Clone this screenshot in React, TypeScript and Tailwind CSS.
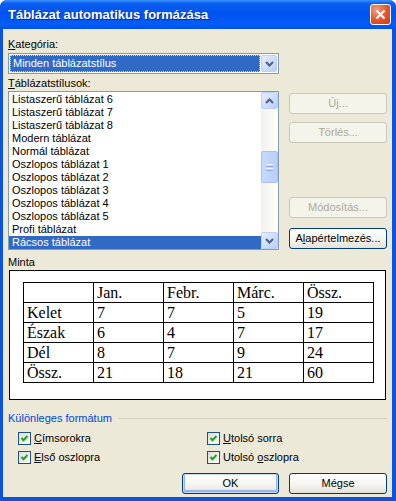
import React from 'react';

const styles = [
    'Listaszerű táblázat 6',
    'Listaszerű táblázat 7',
    'Listaszerű táblázat 8',
    'Modern táblázat',
    'Normál táblázat',
    'Oszlopos táblázat 1',
    'Oszlopos táblázat 2',
    'Oszlopos táblázat 3',
    'Oszlopos táblázat 4',
    'Oszlopos táblázat 5',
    'Profi táblázat',
    'Rácsos táblázat',
];

const sample = [
    ['', 'Jan.', 'Febr.', 'Márc.', 'Össz.'],
    ['Kelet', '7', '7', '5', '19'],
    ['Észak', '6', '4', '7', '17'],
    ['Dél', '8', '7', '9', '24'],
    ['Össz.', '21', '18', '21', '60'],
];

function Chevron({ up = false }: { up?: boolean }) {
    return (
        <svg width="9" height="6" viewBox="0 0 9 6">
            <path
                d={up ? 'M1 5 L4.5 1.5 L8 5' : 'M1 1 L4.5 4.5 L8 1'}
                fill="none"
                stroke="#4D6185"
                strokeWidth="2"
            />
        </svg>
    );
}

function ScrollButton({ up = false }: { up?: boolean }) {
    return (
        <div className="h-[17px] w-[17px] flex items-center justify-center rounded-[2px] border border-[#BAD0F7] bg-[linear-gradient(135deg,#E6EEFF,#B9CEF9)]">
            <Chevron up={up} />
        </div>
    );
}

function Button({
    children,
    disabled = false,
    isDefault = false,
    width = 'w-[98px]',
}: {
    children: React.ReactNode;
    disabled?: boolean;
    isDefault?: boolean;
    width?: string;
}) {
    const base = 'h-[21px] flex items-center justify-center rounded-[3px] border text-[11px]';
    if (disabled) {
        return (
            <div className={`${base} ${width} border-[#C9C7BA] bg-[#F5F4EA] text-[#ACA899]`}>
                {children}
            </div>
        );
    }
    return (
        <div
            className={`${base} ${width} border-[#003C74] bg-[linear-gradient(180deg,#FFFFFF_0%,#F4F3EE_60%,#E3E1D7_100%)] text-black ${
                isDefault ? 'shadow-[inset_0_0_0_1px_#C6D9F7,inset_0_-1px_0_2px_#98B4EC]' : ''
            }`}
        >
            {children}
        </div>
    );
}

function Check({ label }: { label: React.ReactNode }) {
    return (
        <div className="flex items-center h-[13px]">
            <span className="w-[13px] h-[13px] flex items-center justify-center border border-[#1C5180] bg-[linear-gradient(135deg,#DCDCD7,#FFFFFF)]">
                <svg width="9" height="9" viewBox="0 0 9 9">
                    <path d="M1.5 4 L3.5 6.2 L7.5 2" fill="none" stroke="#21A121" strokeWidth="2" />
                </svg>
            </span>
            <span className="ml-[3px] leading-[13px]">{label}</span>
        </div>
    );
}

export default function App() {
    return (
        <div className="w-[396px] h-[501px] bg-white font-['Liberation_Sans',Tahoma,sans-serif]">
            <div className="h-full flex flex-col rounded-t-[7px] overflow-hidden bg-[#0B53E0]">
                {/* title bar */}
                <div className="h-[29px] shrink-0 flex items-center pl-[8px] pr-[5px] bg-[linear-gradient(180deg,#3D95FF_0%,#0A5EF0_12%,#0053EE_45%,#005CF8_85%,#0050E6_100%)]">
                    <span className="flex-1 text-white font-bold text-[13px] [text-shadow:1px_1px_#0A2B8C]">
                        Táblázat automatikus formázása
                    </span>
                    <div className="w-[21px] h-[21px] rounded-[3px] border border-white bg-[radial-gradient(circle_at_30%_25%,#F29A7C,#E0552F_55%,#C63A17)] flex items-center justify-center">
                        <svg width="11" height="11" viewBox="0 0 11 11">
                            <path d="M1.5 1.5 L9.5 9.5 M9.5 1.5 L1.5 9.5" stroke="white" strokeWidth="2.2" />
                        </svg>
                    </div>
                </div>

                <div className="flex-1 flex flex-col pl-[3px] pr-[4px] pb-[4px]">
                    <div className="flex-1 flex flex-col bg-[#ECE9D8] pl-[5px] pr-[5px] pt-[9px] text-[11px] text-black">
                        <div className="h-[13px] leading-[13px]">
                            <span className="underline">K</span>ategória:
                        </div>
                        <div className="mt-[2px] w-[271px] h-[21px] border border-[#7F9DB9] bg-white flex p-[1px]">
                            <div className="flex-1 flex items-center bg-[#316AC5] text-white pl-[2px] border border-dotted border-[#C5D3EE]">
                                Minden táblázatstílus
                            </div>
                            <div className="ml-[1px] w-[16px] flex items-center justify-center rounded-[2px] border border-[#BAD0F7] bg-[linear-gradient(135deg,#E6EEFF,#B9CEF9)]">
                                <Chevron />
                            </div>
                        </div>

                        <div className="mt-[3px] h-[13px] leading-[13px]">
                            <span className="underline">T</span>áblázatstílusok:
                        </div>
                        <div className="mt-[1px] flex gap-[10px]">
                            <div className="w-[271px] h-[159px] border border-[#7F9DB9] bg-white flex">
                                <div className="flex-1 pt-[1px] flex flex-col">
                                    {styles.map((s, i) => (
                                        <div
                                            key={s}
                                            className={`h-[13px] leading-[13px] pl-[3px] ${
                                                i === styles.length - 1 ? 'bg-[#316AC5] text-white' : ''
                                            }`}
                                        >
                                            {s}
                                        </div>
                                    ))}
                                </div>
                                <div className="w-[17px] flex flex-col bg-[linear-gradient(90deg,#F3F1EC,#FEFEFB)]">
                                    <ScrollButton up />
                                    <div className="mt-[42px] h-[32px] rounded-[2px] border border-[#A9C0F2] bg-[linear-gradient(90deg,#C9D8FC,#BACFFA)] flex flex-col items-center justify-center gap-[1px]">
                                        <div className="w-[7px] h-px bg-[#EEF4FE]" />
                                        <div className="w-[7px] h-px bg-[#8CB0F8]" />
                                        <div className="w-[7px] h-px bg-[#EEF4FE]" />
                                        <div className="w-[7px] h-px bg-[#8CB0F8]" />
                                    </div>
                                    <div className="mt-auto">
                                        <ScrollButton />
                                    </div>
                                </div>
                            </div>
                            <div className="w-[98px] flex flex-col pt-[2px] pb-[1px]">
                                <Button disabled>Új...</Button>
                                <div className="mt-[8px]">
                                    <Button disabled>Törlés...</Button>
                                </div>
                                <div className="mt-auto">
                                    <Button disabled>Módosítás...</Button>
                                </div>
                                <div className="mt-[10px]">
                                    <Button>
                                        <span>
                                            A<span className="underline">l</span>apértelmezés...
                                        </span>
                                    </Button>
                                </div>
                            </div>
                        </div>

                        <div className="mt-[6px] h-[13px] leading-[13px]">Minta</div>
                        <div className="mt-[1px] ml-[1px] w-[377px] h-[130px] border border-black bg-white pt-[11px] pl-[13px]">
                            <table className="border-collapse table-fixed w-[350px] font-['Liberation_Serif','Times_New_Roman',serif] text-[16px]">
                                <tbody>
                                    {sample.map((row, r) => (
                                        <tr key={r}>
                                            {row.map((c, ci) => (
                                                <td
                                                    key={ci}
                                                    className="h-[20px] w-[70px] p-0 pl-[3px] leading-[18px] border border-black align-middle"
                                                >
                                                    {c}
                                                </td>
                                            ))}
                                        </tr>
                                    ))}
                                </tbody>
                            </table>
                        </div>

                        <div className="mt-[12px] h-[13px] flex items-center">
                            <span className="text-[#0046D5] leading-[13px]">Különleges formátum</span>
                            <div className="ml-[6px] flex-1 h-px bg-[#D0D0BF]" />
                        </div>
                        <div className="mt-[7px] pl-[10px] grid grid-cols-[189px_1fr] gap-y-[6px]">
                            <Check label={<><span className="underline">C</span>ímsorokra</>} />
                            <Check label={<><span className="underline">U</span>tolsó sorra</>} />
                            <Check label={<><span className="underline">E</span>lső oszlopra</>} />
                            <Check label={<>Utolsó <span className="underline">o</span>szlopra</>} />
                        </div>

                        <div className="mt-[9px] flex justify-end gap-[10px]">
                            <Button isDefault width="w-[97px]">OK</Button>
                            <Button width="w-[98px]">Mégse</Button>
                        </div>
                    </div>
                </div>
            </div>
        </div>
    );
}
